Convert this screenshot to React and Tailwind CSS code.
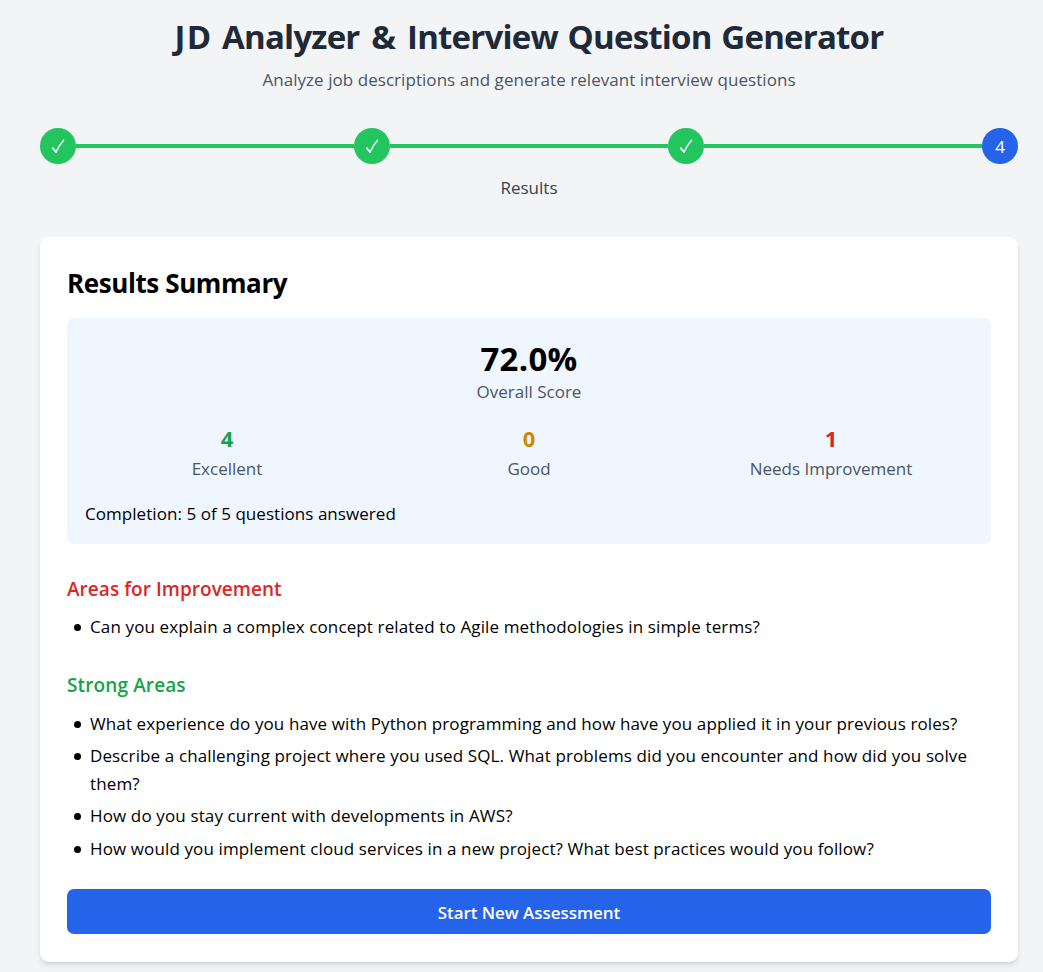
const stats = [
  { value: "4", label: "Excellent", color: "text-[#16a34a]" },
  { value: "0", label: "Good", color: "text-[#ca8a04]" },
  { value: "1", label: "Needs Improvement", color: "text-[#dc2626]" },
];

const strongAreas = [
  { text: "What experience do you have with Python programming and how have you applied it in your previous roles?", tracking: "tracking-[0.11px]" },
  { text: "Describe a challenging project where you used SQL. What problems did you encounter and how did you solve them?", tracking: "tracking-[0.12px]" },
  { text: "How do you stay current with developments in AWS?", tracking: "tracking-[0.13px]" },
  { text: "How would you implement cloud services in a new project? What best practices would you follow?", tracking: "tracking-[0.12px]" },
];

function CompletedStep() {
  return (
    <>
      <div className="flex size-9 shrink-0 items-center justify-center rounded-full bg-[#22c55e]">
        <svg className="size-4" viewBox="0 0 16 16" fill="none" stroke="white" strokeLinecap="round" strokeLinejoin="round">
          <path d="M2.7 10.2 L6 14" strokeWidth="1.8" />
          <path d="M6 14 C8 9.8 10.4 5.8 13.6 2.2" strokeWidth="1.4" />
        </svg>
      </div>
      <div className="h-1 flex-1 bg-[#22c55e]" />
    </>
  );
}

function Bullet({ text, tracking }) {
  return (
    <li className="flex">
      <span className="mt-[11px] mr-[9px] ml-[7px] size-[7px] shrink-0 rounded-full bg-black" />
      <span className={tracking}>{text}</span>
    </li>
  );
}

export default function App() {
  return (
    <div className="min-h-[972px] bg-[#f3f4f6] pt-[17px] pr-[25px] pb-[10px] pl-10 font-['Open_Sans',sans-serif] text-[17px] leading-7 text-black">
      <header className="text-center">
        <h1 className="text-[33px] leading-10 font-bold tracking-[-0.8px] [word-spacing:2px] text-[#1f2937]">
          <span className="tracking-[1.2px]">JD</span> Analyzer <span className="px-0.5">&amp;</span> Interview Question Generator
        </h1>
        <p className="mt-[9px] leading-[27px] tracking-[0.05px] text-[#4b5563]">
          Analyze job descriptions and generate relevant interview questions
        </p>
      </header>

      <div className="mt-[35px] flex items-center">
        <CompletedStep />
        <CompletedStep />
        <CompletedStep />
        <div className="flex size-9 shrink-0 items-center justify-center rounded-full bg-[#2563eb] pt-0.5 text-white">4</div>
      </div>
      <div className="mt-[10px] text-center text-[#374151]">Results</div>

      <main className="mt-[35px] rounded-[9px] bg-white px-[27px] pt-[27px] pb-7 shadow-[0_4px_6px_-1px_rgba(0,0,0,0.1),0_2px_4px_-2px_rgba(0,0,0,0.1)]">
        <h2 className="text-[26px] leading-[38px] font-bold tracking-[-0.4px]">Results Summary</h2>

        <section className="mt-4 rounded-[7px] bg-[#eff6ff] px-[18px] pt-[18px] pb-4">
          <div className="text-center">
            <div className="pt-px text-[33px] leading-[43px] font-bold tracking-[0.3px]">72.0%</div>
            <div className="leading-[23px] text-[#4b5563]">Overall Score</div>
          </div>
          <div className="mt-5 grid grid-cols-3 gap-[18px] text-center">
            {stats.map((s) => (
              <div key={s.label}>
                <div className={`text-[22px] leading-[30px] font-bold ${s.color}`}>{s.value}</div>
                <div className="mt-0.5 text-[#4b5563]">{s.label}</div>
              </div>
            ))}
          </div>
          <p className="mt-[17px] tracking-[0.05px]">Completion: 5 of 5 questions answered</p>
        </section>

        <section className="mt-[30px]">
          <h3 className="text-[19px] leading-[30px] font-semibold tracking-[0.04px] text-[#dc2626]">Areas for Improvement</h3>
          <ul className="mt-[9px]">
            <Bullet
              text="Can you explain a complex concept related to Agile methodologies in simple terms?"
              tracking="tracking-[0.13px]"
            />
          </ul>
        </section>

        <section className="mt-[29px]">
          <h3 className="text-[19px] leading-[30px] font-semibold tracking-[0.12px] text-[#16a34a]">Strong Areas</h3>
          <ul className="mt-[9.75px] flex flex-col gap-[4.25px]">
            {strongAreas.map((a) => (
              <Bullet key={a.text} text={a.text} tracking={a.tracking} />
            ))}
          </ul>
        </section>

        <button className="mt-[26.5px] block h-[45px] w-full rounded-[7px] bg-[#2563eb] pt-[3px] font-semibold tracking-[-0.05px] text-white">
          Start New Assessment
        </button>
      </main>
    </div>
  );
}
